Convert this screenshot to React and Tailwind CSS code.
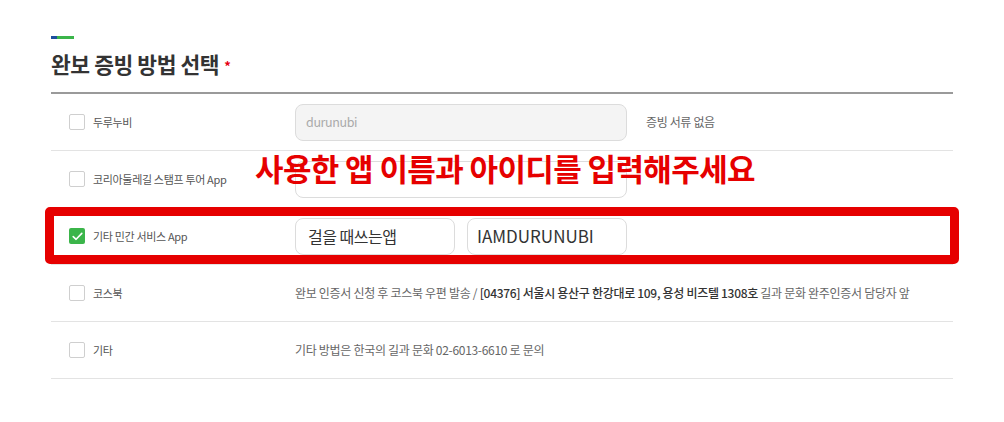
import React from 'react';

const font = "font-['Noto_Sans_CJK_KR','Noto_Sans',sans-serif]";

function Check({ checked }) {
  if (checked) {
    return (
      <span className="w-[16px] h-[16px] shrink-0 rounded-[2px] bg-[#3bb54a] flex items-center justify-center">
        <svg width="11" height="9" viewBox="0 0 11 9" fill="none">
          <path d="M1.2 4.6 L4.1 7.3 L9.8 1.4" stroke="#fff" strokeWidth="1.6" strokeLinecap="round" strokeLinejoin="round" />
        </svg>
      </span>
    );
  }
  return <span className="w-[16px] h-[16px] shrink-0 rounded-[2px] border border-[#cfcfcf] bg-white" />;
}

function Row({ label, checked, children }) {
  return (
    <div className="relative h-[57px] flex items-center border-b border-[#e3e3e3]">
      <div className="w-[244px] shrink-0 flex items-center pl-[18px] gap-[8px]">
        <Check checked={checked} />
        <span className="text-[11px] tracking-[-0.03em] text-[#555]">{label}</span>
      </div>
      {children}
    </div>
  );
}

export default function App() {
  return (
    <div className={`${font} bg-white w-[1004px] h-[422px] px-[51px] pt-[36px]`}>
      <div className="flex h-[3px] w-[23px]">
        <span className="w-[6px] bg-[#1d4f9e]" />
        <span className="flex-1 bg-[#3bb54a]" />
      </div>
      <div className="mt-[6px] flex items-center h-[38px]">
        <h2 className="text-[21.5px] font-bold text-[#333] tracking-[-0.02em]">완보 증빙 방법 선택</h2>
        <span className="ml-[5px] mt-[4px] text-[13px] font-bold text-[#e60012]">*</span>
      </div>

      <div className="mt-[9px] w-[902px] border-t-2 border-[#9a9a9a]">
        <Row label="두루누비">
          <div className="w-[332px] h-[37px] rounded-[8px] border border-[#dcdcdc] bg-[#f4f4f4] flex items-center px-[10px] text-[12.5px] tracking-[-0.03em] text-[#aaa]">
            durunubi
          </div>
          <span className="ml-[19px] text-[12px] tracking-[-0.03em] text-[#666]">증빙 서류 없음</span>
        </Row>

        <Row label="코리아둘레길 스탬프 투어 App">
          <div className="w-[332px] h-[37px] rounded-[8px] border border-[#dcdcdc] bg-white" />
          <div className="absolute left-[204px] top-[-4px] text-[31px] leading-[42px] font-bold tracking-[-0.02em] text-[#e60000] whitespace-nowrap">
            사용한 앱 이름과 아이디를 입력해주세요
          </div>
        </Row>

        <Row label="기타 민간 서비스 App" checked>
          <div className="flex gap-[12px]">
            <div className="w-[160px] h-[37px] rounded-[8px] border border-[#dcdcdc] bg-white flex items-center px-[12px] text-[16px] tracking-[-0.03em] text-[#333]">
              걸을 때쓰는앱
            </div>
            <div className="w-[160px] h-[37px] rounded-[8px] border border-[#dcdcdc] bg-white flex items-center px-[9px] text-[17px] text-[#333]">
              IAMDURUNUBI
            </div>
          </div>
          <div className="absolute left-[-6px] right-[-6px] top-[-1px] bottom-[0px] border-[9px] border-[#e60000] rounded-[5px]" />
        </Row>

        <Row label="코스북">
          <p className="text-[12px] tracking-[-0.025em] text-[#666] whitespace-nowrap">
            완보 인증서 신청 후 코스북 우편 발송 /{' '}
            <span className="font-medium text-[#333]">[04376] 서울시 용산구 한강대로 109, 용성 비즈텔 1308호</span>{' '}
            길과 문화 완주인증서 담당자 앞
          </p>
        </Row>

        <Row label="기타">
          <p className="text-[12px] tracking-[-0.025em] text-[#666] whitespace-nowrap">
            기타 방법은 한국의 길과 문화 02-6013-6610 로 문의
          </p>
        </Row>
      </div>
    </div>
  );
}
